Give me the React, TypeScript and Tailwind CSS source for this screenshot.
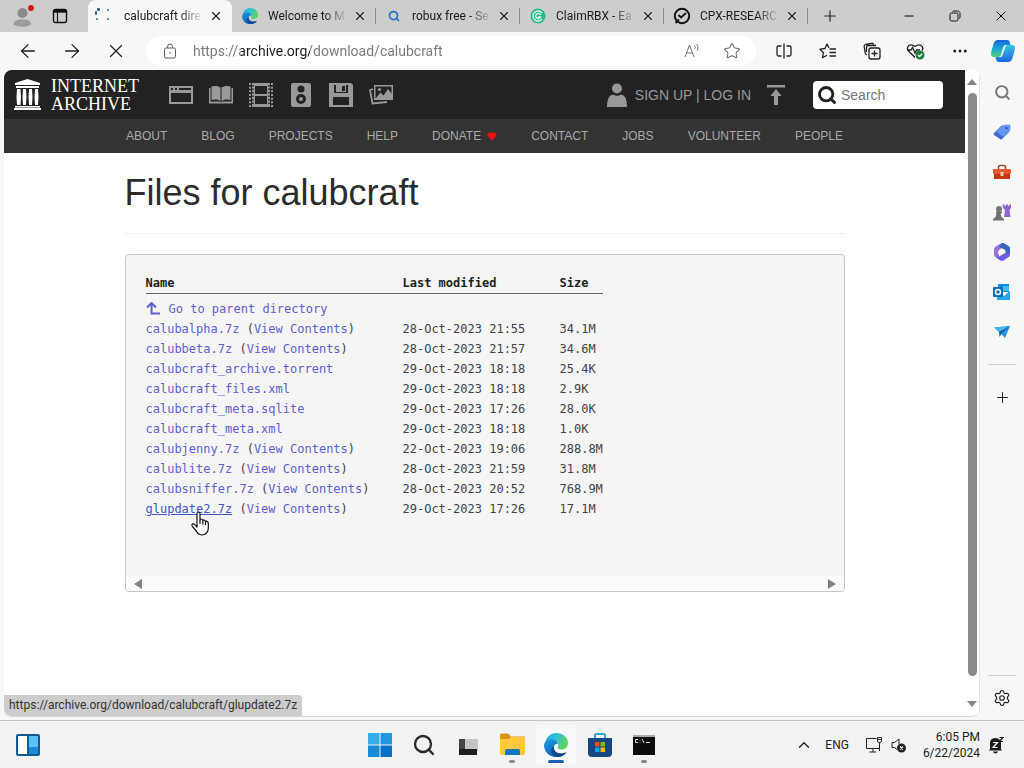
import React, { useState } from 'react';
import { ArrowLeft, ArrowRight, ChevronUp, Minus, MoreHorizontal, Plus, Search, Settings, Star, X } from 'lucide-react';

const tabs = [
  { title: 'calubcraft dire', icon: <LoadingIcon />, active: true },
  { title: 'Welcome to M', icon: <EdgeIcon className="h-4 w-4" /> },
  { title: 'robux free - Se', icon: <Search className="h-3 w-3 text-[#2f6fc4]" strokeWidth={3.5} /> },
  { title: 'ClaimRBX - Ea', icon: <ClaimIcon /> },
  { title: 'CPX-RESEARC', icon: <CpxIcon /> },
];

const navLinks = ['About', 'Blog', 'Projects', 'Help', 'Donate', 'Contact', 'Jobs', 'Volunteer', 'People'];

const files = [
  { name: 'calubalpha.7z', date: '28-Oct-2023 21:55', size: '34.1M', view: true },
  { name: 'calubbeta.7z', date: '28-Oct-2023 21:57', size: '34.6M', view: true },
  { name: 'calubcraft_archive.torrent', date: '29-Oct-2023 18:18', size: '25.4K' },
  { name: 'calubcraft_files.xml', date: '29-Oct-2023 18:18', size: '2.9K' },
  { name: 'calubcraft_meta.sqlite', date: '29-Oct-2023 17:26', size: '28.0K' },
  { name: 'calubcraft_meta.xml', date: '29-Oct-2023 18:18', size: '1.0K' },
  { name: 'calubjenny.7z', date: '22-Oct-2023 19:06', size: '288.8M', view: true },
  { name: 'calublite.7z', date: '28-Oct-2023 21:59', size: '31.8M', view: true },
  { name: 'calubsniffer.7z', date: '28-Oct-2023 20:52', size: '768.9M', view: true },
  { name: 'glupdate2.7z', date: '29-Oct-2023 17:26', size: '17.1M', view: true, hovered: true },
];

function LoadingIcon() {
  return (
    <svg viewBox="0 0 16 16" className="h-4 w-4">
      <g fill="#33648f">
        <rect x="3" y="0" width="3" height="3" rx="1" />
        <rect x="1" y="3" width="2" height="4" rx="1" />
        <rect x="2" y="10" width="2" height="2" rx="1" />
        <rect x="13" y="1" width="2" height="2" rx="1" />
        <rect x="13" y="10" width="2" height="2" rx="1" />
      </g>
    </svg>
  );
}

function EdgeIcon({ className }: { className: string }) {
  return (
    <svg viewBox="0 0 24 24" className={className}>
      <defs>
        <linearGradient id="edgeTop" x1="0" y1="0" x2="1" y2=".4">
          <stop offset="0" stopColor="#1b9fdc" />
          <stop offset=".5" stopColor="#2fc3d8" />
          <stop offset="1" stopColor="#5fd35b" />
        </linearGradient>
        <linearGradient id="edgeSide" x1="0" y1="0" x2=".6" y2="1">
          <stop offset="0" stopColor="#1b9de2" />
          <stop offset="1" stopColor="#0b5cb0" />
        </linearGradient>
      </defs>
      <path d="M1 10.5C2 4.500 6.500 0 12.300 0 19 0 24 4.500 24 10c0 4-3 6.500-6.500 6.500-3 0-4.400-1.300-3.700-2.300 1.600-2.200.3-5.700-3.800-6.500C6 6.900 2.500 8.500 1 10.500Z" fill="url(#edgeTop)" />
      <path d="M0 12.300C.3 8 5 5.500 9 6.400c3.500.8 5 3.200 4.800 5-2-1-4 .8-4 3.700 0 5 6.200 7 11.700 4.300C19 22.800 15.800 24 12 24 5.300 24 0 18.700 0 12.300Z" fill="url(#edgeSide)" />
      <path d="M9.800 13.500c-.7 5.500 5.700 8.700 11.500 6 .7-.3 1 .3.600.8C19.500 23.200 16 24.200 12.500 24 7 23 5 16 9.800 13.500Z" fill="#15478f" />
    </svg>
  );
}

function ClaimIcon() {
  return (
    <svg viewBox="0 0 16 16" className="h-4 w-4">
      <circle cx="8" cy="8" r="7.500" fill="#27b98e" />
      <path d="M12 5a5 5 0 1 0 0 6M10.500 7a2.500 2.500 0 1 0 0 2H8" fill="none" stroke="#d6f7ec" strokeWidth="1.500" />
    </svg>
  );
}

function CpxIcon() {
  return (
    <svg viewBox="0 0 18 18" className="h-[18px] w-[18px] shrink-0" fill="none" stroke="#111">
      <circle cx="9" cy="9" r="7.200" strokeWidth="2" />
      <path d="m5.500 8 2.500 2.500L13 6M2.500 16 6 12.500" strokeWidth="1.800" />
    </svg>
  );
}

function TabBar() {
  return (
    <div className="flex h-8 bg-[#cdcdcd]">
      <div className="flex w-[88px] shrink-0 items-center">
        <button aria-label="Profile" className="ml-3 mr-4 h-8 w-6">
          <svg viewBox="0 0 24 32" className="h-8 w-6">
            <circle cx="10.500" cy="13" r="5" fill="#8b8b8b" />
            <path d="M1.500 24.500c0-3.500 3-5 9-5s8.500 1.500 8.500 5c-4 3-13 3-17.500 0Z" fill="#9b9b9b" />
            <circle cx="19" cy="8" r="3" fill="#d41324" />
          </svg>
        </button>
        <button aria-label="Tab actions">
          <svg viewBox="0 0 16 16" className="h-4 w-4" fill="none" stroke="#111">
            <rect x="1.500" y="1.500" width="13" height="13" rx="2" strokeWidth="1.400" />
            <path d="M2 3.200h12" strokeWidth="3" />
            <path d="M5.500 4v10" strokeWidth="1.200" />
          </svg>
        </button>
      </div>
      {tabs.map((tab) => (
        <div
          key={tab.title}
          className={
            tab.active
              ? 'flex w-36 items-center rounded-t-lg bg-[#f7f7f7] pl-1.5'
              : 'flex w-36 items-center pl-2.5'
          }
        >
          <span className={tab.active ? 'flex w-[30px] shrink-0' : 'flex w-[26px] shrink-0'}>
            <span className="flex w-4 justify-center">{tab.icon}</span>
          </span>
          <span className="w-20 shrink-0 whitespace-nowrap text-xs text-[#1b1b1b] [mask-image:linear-gradient(to_right,black_70%,transparent)]">
            {tab.title}
          </span>
          <button aria-label="Close tab" className="mr-1 flex h-4 flex-1 items-center justify-center">
            <X className="h-3.5 w-3.5 shrink-0 text-[#222]" strokeWidth={2} />
          </button>
          <span className={tab.active ? 'h-4 w-px' : 'h-4 w-px bg-[#8a8a8a]'} />
        </div>
      ))}
      <button aria-label="New tab" className="flex w-11 items-center justify-center">
        <Plus className="h-[18px] w-[18px] text-[#222]" strokeWidth={1.5} />
      </button>
      <div className="ml-auto flex">
        <button aria-label="Minimize" className="flex w-[46px] items-center justify-center">
          <Minus className="h-3.5 w-3.5 text-black" strokeWidth={1.8} />
        </button>
        <button aria-label="Restore" className="flex w-[46px] items-center justify-center">
          <svg viewBox="0 0 12 12" className="h-3 w-3" fill="none" stroke="#111">
            <rect x="1" y="3" width="8" height="8" rx="1.500" />
            <path d="M3.500 1.500C4 1 4.500 1 5 1h3.500C10 1 11 2 11 3.500V7c0 .5 0 1-.5 1.500" />
          </svg>
        </button>
        <button aria-label="Close" className="flex w-[46px] items-center justify-center">
          <X className="h-4 w-4 text-black" strokeWidth={1.5} />
        </button>
      </div>
    </div>
  );
}

function Toolbar() {
  const [url, setUrl] = useState('https://archive.org/download/calubcraft');

  return (
    <div className="flex h-[38px] items-center bg-[#f7f7f7] pl-1.5 text-[#222]">
      <button aria-label="Back" className="flex w-11 justify-center">
        <ArrowLeft className="h-[22px] w-[22px]" strokeWidth={1.4} />
      </button>
      <button aria-label="Forward" className="flex w-11 justify-center">
        <ArrowRight className="h-[22px] w-[22px]" strokeWidth={1.4} />
      </button>
      <button aria-label="Stop loading" className="flex w-11 justify-center">
        <X className="h-[22px] w-[22px]" strokeWidth={1.4} />
      </button>
      <div className="ml-2 mr-1.5 flex h-[30px] flex-1 items-center rounded-full bg-white">
        <svg viewBox="0 0 16 16" className="ml-4 h-4 w-4" fill="none" stroke="#5c5c5c">
          <rect x="2.500" y="5" width="11" height="10" rx="1.500" />
          <path d="M5.500 5V3.500a2.500 2.500 0 0 1 5 0V5" />
          <circle cx="8" cy="10" r=".8" fill="#5c5c5c" stroke="none" />
        </svg>
        <input
          aria-label="Address"
          value={url}
          onChange={(e) => setUrl(e.target.value)}
          className="ml-[15px] min-w-0 flex-1 bg-[linear-gradient(to_right,#767676_48px,#1b1b1b_48px,#1b1b1b_117px,#767676_117px)] bg-clip-text text-sm text-transparent outline-none"
        />
        <button aria-label="Read aloud" className="flex w-10 justify-center">
          <svg viewBox="0 0 18 16" className="h-4 w-[18px]" fill="none" stroke="#707070">
            <path d="m2 14 4.500-12L11 14M3.500 10h6M11.500 2.500c1 1 1 2.500.2 3.700M13.500 1c2 2 1.800 4.500.5 6.500" />
          </svg>
        </button>
        <button aria-label="Favorite" className="mr-1 flex w-10 justify-center">
          <Star className="h-[18px] w-[18px] text-[#707070]" strokeWidth={1.4} />
        </button>
      </div>
      <button aria-label="Split screen" className="flex w-11 justify-center">
        <svg viewBox="0 0 18 18" className="h-[18px] w-[18px]" fill="none" stroke="#222" strokeWidth="1.300">
          <path d="M6.500 4H3.500Q2 4 2 5.500v7Q2 14 3.500 14h3M11.500 4h3Q16 4 16 5.500v7q0 1.500-1.500 1.500h-3M9 1.500v15" />
        </svg>
      </button>
      <button aria-label="Favorites" className="flex w-11 justify-center">
        <svg viewBox="0 0 18 18" className="h-[18px] w-[18px]" fill="none" stroke="#222" strokeWidth="1.300" strokeLinejoin="round">
          <path d="M10 6 8 2 6 6.500l-5 .7 3.500 3.500-1 5L8 13.300M10.500 7H17M10.500 10.500H17M10.500 14H17" />
        </svg>
      </button>
      <button aria-label="Collections" className="flex w-11 justify-center">
        <svg viewBox="0 0 18 18" className="h-[18px] w-[18px]" fill="none" stroke="#222" strokeWidth="1.300">
          <rect x="6" y="6" width="11" height="11" rx="2" />
          <path d="M11.500 8.500v6M8.500 11.500h6M4 12.500c-1 0-1.500-.5-1.800-1.300L1.200 4.500c-.2-1 .4-1.700 1.300-2l6-1.200c1-.2 1.800.3 2 1.200l.3 1M3.500 10V5.500Q3.500 3.500 5.500 3.500H13" />
        </svg>
      </button>
      <button aria-label="Browser essentials" className="flex w-11 justify-center">
        <svg viewBox="0 0 20 18" className="h-[18px] w-5" fill="none" stroke="#222" strokeWidth="1.300">
          <path d="M9 15.500 2.500 9C-.5 5 4 .5 9 4.500c5-4 9.500.5 7 4M1 8h4l1.500-2.500L9 11l1.700-3H14" />
          <circle cx="14" cy="13" r="4.500" fill="#168039" stroke="none" />
          <path d="m12 13 1.500 1.500 2.700-2.800" stroke="#fff" />
        </svg>
      </button>
      <button aria-label="Settings and more" className="flex w-11 justify-center">
        <MoreHorizontal className="h-[18px] w-[18px]" strokeWidth={2} />
      </button>
      <button aria-label="Copilot" className="flex w-[42px] justify-center">
        <svg viewBox="0 0 24 24" className="h-6 w-6">
          <defs>
            <linearGradient id="copA" x1="0" y1="0" x2="0" y2="1">
              <stop offset="0" stopColor="#1264d8" />
              <stop offset=".5" stopColor="#19a8cf" />
              <stop offset="1" stopColor="#55d27a" />
            </linearGradient>
            <linearGradient id="copB" x1="0" y1="0" x2="0" y2="1">
              <stop offset="0" stopColor="#3cc4e0" />
              <stop offset="1" stopColor="#1967df" />
            </linearGradient>
          </defs>
          <path d="M7 1h9q2.500 0 3 3l.5 2H15q-2 0-2.500 2l-2.500 8q-.7 2-2.500 2H3q-3 0-3-3 0-1 .5-3l2-7Q3.500 1 7 1Z" fill="url(#copA)" />
          <path d="M17 23H8q-2.500 0-3-3l-.5-2H9q2 0 2.500-2L14 8q.7-2 2.500-2H21q3 0 3 3 0 1-.5 3l-2 7q-1 4-4.500 4Z" fill="url(#copB)" />
          <path d="M12.500 8Q13 6 15 6h1.500Q14.700 6 14 8l-2.500 8Q11 18 9 18H7.500Q9.300 18 10 16Z" fill="#e9fbff" />
        </svg>
      </button>
    </div>
  );
}

function ArchiveHeader() {
  return (
    <header className="font-['Liberation_Sans',Arial,sans-serif]">
      <div className="flex h-[49px] items-center bg-[#222] pl-2.5 text-[#999]">
        <a href="#home" aria-label="Internet Archive" className="flex w-[147px] items-center gap-2.5 text-white">
          <svg viewBox="0 0 27 31" className="h-[31px] w-[27px] shrink-0" fill="currentColor">
            <path d="M13.500 0 26 4v2H1V4ZM2 7h23v2H2ZM1 27h25v1.500H1ZM0 29h27v2H0Z" />
            <path d="M3 10h3.500l.5 8-.5 8H3l-.5-8ZM9 10h3l.5 8-.5 8H9l-.5-8ZM15 10h3l.5 8-.5 8h-3l-.5-8ZM21 10h3l.5 8-.5 8h-3l-.5-8Z" />
          </svg>
          <span className="flex flex-col font-['Liberation_Serif',serif] text-lg leading-[18px]">
            <span>INTERNET</span>
            <span>ARCHIVE</span>
          </span>
        </a>
        <a href="#web" aria-label="Web" className="flex w-10 justify-center">
          <svg viewBox="0 0 24 24" className="h-6 w-6" fill="currentColor">
            <path d="M0 3h24v18H0ZM2 10v9h20v-9ZM2 5v2h2V5Zm4 0v2h2V5Zm4 0v2h12V5Z" fillRule="evenodd" />
          </svg>
        </a>
        <a href="#texts" aria-label="Texts" className="flex w-10 justify-center">
          <svg viewBox="0 0 24 24" className="h-6 w-6" fill="currentColor">
            <path d="M2.500 3.500c3-1 7-.5 9 1V18c-2-1.500-6-2-9-1ZM21.500 3.500c-3-1-7-.5-9 1V18c2-1.500 6-2 9-1Z" />
            <path d="M0 5h1.500v13.500H11l1 .8 1-.8h9.500V5H24v15.500H0Z" />
          </svg>
        </a>
        <a href="#video" aria-label="Video" className="flex w-10 justify-center">
          <svg viewBox="0 0 24 24" className="h-6 w-6" fill="currentColor">
            <path d="M3 0h18v24H3ZM6 3v8h12V3ZM6 13v8h12v-8Z" fillRule="evenodd" />
            <path d="M1 0v24M23 0v24" stroke="currentColor" strokeWidth="2" strokeDasharray="2 1.670" />
            <path d="M4 2v20M20 2v20" stroke="#222" strokeWidth="1.500" strokeDasharray="1.500 2" />
          </svg>
        </a>
        <a href="#audio" aria-label="Audio" className="flex w-10 justify-center">
          <svg viewBox="0 0 24 24" className="h-6 w-6" fill="currentColor">
            <path d="M4 0h16q2 0 2 2v20q0 2-2 2H4q-2 0-2-2V2q0-2 2-2Z" />
            <circle cx="12" cy="6" r="3.500" fill="#222" />
            <circle cx="12" cy="16" r="5" fill="#222" />
            <circle cx="12" cy="16" r="2" />
          </svg>
        </a>
        <a href="#software" aria-label="Software" className="flex w-10 justify-center">
          <svg viewBox="0 0 24 24" className="h-6 w-6" fill="currentColor">
            <path d="M0 0h22l2 2v22H0ZM5 2v8h14V2ZM4 14v8h16v-8Z" fillRule="evenodd" />
            <path d="M7 2h10v7H7Zm6 1v5h3V3Z" fillRule="evenodd" />
          </svg>
        </a>
        <a href="#images" aria-label="Images" className="flex w-10 justify-center">
          <svg viewBox="0 0 24 24" className="h-6 w-6" fill="currentColor">
            <path d="M5 2h19v15H5Zm1.500 1.500v12l5-6 3 3 4.500-6.500 3.500 4.500V3.500Z" fillRule="evenodd" />
            <circle cx="10.500" cy="6.500" r="1.500" />
            <path d="m4 6-3 1 2.500 13.500L18 19" fill="none" stroke="currentColor" strokeWidth="1.800" />
          </svg>
        </a>
        <div className="ml-auto flex items-center text-sm">
          <svg viewBox="0 0 20 26" className="mr-2 h-[26px] w-5" fill="currentColor">
            <circle cx="10" cy="6.500" r="5" />
            <path d="M0 25q0-12 6-12.500 4 2.500 8 0Q20 13 20 25Z" />
          </svg>
          <span>
            <a href="#signup">SIGN UP</a> | <a href="#login">LOG IN</a>
          </span>
          <button aria-label="Upload" className="ml-4 mr-7">
            <svg viewBox="0 0 18 20" className="h-5 w-[18px]" fill="currentColor">
              <path d="M0 0h18v2.500H0ZM9 4l5.500 7h-3.500v9H7v-9H3.500Z" />
            </svg>
          </button>
          <label className="mr-[22px] flex h-7 w-[130px] items-center rounded bg-white pl-1">
            <Search className="h-5 w-5 shrink-0 text-[#222]" strokeWidth={3.5} />
            <input aria-label="Search" placeholder="Search" className="ml-1 min-w-0 flex-1 text-sm outline-none placeholder:text-[#777]" />
          </label>
        </div>
      </div>
      <nav className="flex h-[34px] items-center justify-center gap-[34px] bg-[#333] pb-px text-xs uppercase text-[#aaa]">
        {navLinks.map((link) => (
          <a key={link} href={'#' + link.toLowerCase()} className="flex items-center">
            {link}
            {link === 'Donate' && (
              <svg viewBox="0 0 10 10" className="ml-1.5 h-2.5 w-2.5" fill="#ee1111">
                <path d="M5 9.500 1 5.500C-.5 3 2 .5 5 2c3-1.500 5.500 1 4 3.500Z" />
              </svg>
            )}
          </a>
        ))}
      </nav>
    </header>
  );
}

function HandCursor() {
  return (
    <svg viewBox="0 0 20 26" className="absolute left-11 top-3 h-[26px] w-5" fill="#fff" stroke="#111" strokeWidth="1.200" strokeLinejoin="round">
      <path d="M7 16V3q0-2 1.500-2T10 3v7q0-2 1.400-2t1.400 2q.2-1.200 1.400-1T15.500 11q.3-1 1.500-.7t1.300 2V17q0 6-6 7-4 0-6-4l-3.500-4q-1.800-2.500 0-3.300Q4 12.500 7 16Z" />
      <path d="M10 10v3M12.800 10v3.500M15.500 11v3" />
    </svg>
  );
}

function FileList() {
  return (
    <div className="overflow-hidden rounded border border-[#c6c6c6] bg-[#f5f5f5] font-['DejaVu_Sans_Mono',monospace] text-xs leading-5 text-[#444]">
      <div className="h-[321px] px-5 pt-[18px]">
        <table className="w-[457px] table-fixed">
          <thead>
            <tr className="border-b border-[#666] text-left text-[#222]">
              <th className="w-[257px]">Name</th>
              <th className="w-[157px]">Last modified</th>
              <th>Size</th>
            </tr>
          </thead>
          <tbody>
            <tr>
              <td colSpan={3} className="pt-[5px]">
                <a href="#parent" className="flex items-center gap-2 text-[#5f5fd0]">
                  <svg viewBox="0 0 15 15" className="h-[15px] w-[15px]" fill="none" stroke="currentColor" strokeWidth="2">
                    <path d="M1 5.500 5.500 1 10 5.500M5.500 1v10.500H14" />
                  </svg>
                  Go to parent directory
                </a>
              </td>
            </tr>
            {files.map((file) => (
              <tr key={file.name}>
                <td className="relative whitespace-nowrap">
                  <a href={'#' + file.name} className={file.hovered ? 'text-[#3f55c0] underline' : 'text-[#5f5fd0]'}>
                    {file.name}
                  </a>
                  {file.view && (
                    <>
                      {' '}
                      (<a href={'#view-' + file.name} className="text-[#5f5fd0]">View Contents</a>)
                    </>
                  )}
                  {file.hovered && <HandCursor />}
                </td>
                <td>{file.date}</td>
                <td>{file.size}</td>
              </tr>
            ))}
          </tbody>
        </table>
      </div>
      <div className="flex h-[15px] items-center justify-between bg-[#fcfcfc] px-2 text-[#808080]">
        <svg viewBox="0 0 8 10" className="h-2.5 w-2" fill="currentColor"><path d="M8 0v10L0 5Z" /></svg>
        <svg viewBox="0 0 8 10" className="h-2.5 w-2" fill="currentColor"><path d="M0 0v10l8-5Z" /></svg>
      </div>
    </div>
  );
}

function PageView() {
  return (
    <main className="relative mb-[3px] ml-1 flex flex-1 overflow-hidden rounded-lg border-b border-[#d5d5d5] bg-white">
      <div className="min-w-0 flex-1">
        <ArchiveHeader />
        <div className="mx-auto max-w-[720px]">
          <h1 className="border-b border-[#eee] pb-5 pt-5 font-['Liberation_Sans',Arial,sans-serif] text-4xl leading-10 text-[#2c2c2c]">
            Files for calubcraft
          </h1>
          <div className="pt-5">
            <FileList />
          </div>
        </div>
      </div>
      <div className="flex w-[15px] flex-col items-center border-r border-[#e2e2e2] py-2 text-[#868686]">
        <svg viewBox="0 0 10 8" className="h-2 w-2.5" fill="currentColor"><path d="M5 1l5 6H0Z" /></svg>
        <div className="mb-6 mt-[7px] w-[9px] flex-1 rounded-full bg-[#8b8b8b]" />
        <svg viewBox="0 0 10 8" className="h-2 w-2.5" fill="currentColor"><path d="M0 1h10L5 7Z" /></svg>
      </div>
      <div className="absolute bottom-0 left-0 rounded-tr bg-[#cdcdcd] px-[5px] text-xs leading-[21px] text-[#333]">
        https://archive.org/download/calubcraft/glupdate2.7z
      </div>
    </main>
  );
}

const sidebarApps = [
  {
    label: 'Search',
    icon: <Search className="h-[17px] w-[17px] text-[#777]" strokeWidth={2.8} />,
  },
  {
    label: 'Shopping',
    icon: (
      <svg viewBox="0 0 18 18" className="h-[18px] w-[18px]">
        <path d="m1 10 7-7 6-1q2 0 2 2v5l-7 7q-1 1-2 0l-6-4q-1-1 0-2Z" fill="#3d6dd3" />
        <path d="m3 8 7-6 6-.5q1.500 0 1.500 2L17 8l-7 6Z" fill="#6494ef" />
        <circle cx="13.500" cy="5" r="1.200" fill="#274d9f" />
      </svg>
    ),
  },
  {
    label: 'Tools',
    icon: (
      <svg viewBox="0 0 18 18" className="h-[18px] w-[18px]">
        <path d="M5.500 6V4q0-1.500 2-1.500h3q2 0 2 1.500v2" fill="none" stroke="#9b4a35" strokeWidth="1.500" />
        <rect x="0" y="6" width="18" height="5" rx="1" fill="#e85a2e" />
        <path d="M1 11h16v5H1Z" fill="#c5370f" />
        <rect x="7.500" y="9" width="3" height="4" fill="#f9c9a8" />
      </svg>
    ),
  },
  {
    label: 'Games',
    icon: (
      <svg viewBox="0 0 18 18" className="h-[18px] w-[18px]">
        <path d="M9.500 1.500h2v1.500h1.500V1.500h2V3h1.300V1.500H18V5l-1.500 2 1 7H11l1-7-2-2Z" fill="#8b67cb" />
        <circle cx="6" cy="6" r="3" fill="#777" />
        <path d="M3 8.500h6v2H7.500l1 3.500 2.500 2v1.500H0V16l2.500-2 1-3.500H3Z" fill="#717171" />
      </svg>
    ),
  },
  {
    label: 'Microsoft 365',
    icon: (
      <svg viewBox="0 0 18 18" className="h-[18px] w-[18px]">
        <path d="M9 0Q4 2 1.500 4.500 1 5 1 6v6q0 1 1 1.500l4 3V11.500Q5 11 5 9.500 5 7 9 5Z" fill="#9d72df" />
        <path d="M9 0q1-.3 2 .3l5 3q1 .7 1 1.700v6l-4.500-1V8q0-1-1-1.500L6 4Q7 1 9 0Z" fill="#3c63bb" />
        <path d="M17 10v2q0 1-1 1.700l-5 3.500q-2 1-4 0L2 13.700q3 .5 5-.7l5-3Z" fill="#6a5fe0" />
      </svg>
    ),
  },
  {
    label: 'Outlook',
    icon: (
      <svg viewBox="0 0 18 18" className="h-[18px] w-[18px]">
        <path d="M5 1h11v8H5Z" fill="#1286d9" />
        <path d="M10 3h6v5h-6Z" fill="#39c2f1" />
        <path d="M4 9l7 4 6-5v9H4Z" fill="#26a6e7" />
        <rect x="0" y="4" width="10" height="10" rx="1" fill="#096dbb" />
        <circle cx="5" cy="9" r="2.500" fill="none" stroke="#fff" strokeWidth="1.500" />
      </svg>
    ),
  },
  {
    label: 'Drop',
    icon: (
      <svg viewBox="0 0 18 18" className="h-[18px] w-[18px]">
        <path d="M1 4.500 17 3l-5 12-4-4.500Z" fill="#2492df" />
        <path d="M1 4.500 17 3 6 9Z" fill="#45b6ef" />
        <path d="M6 9 17 3 8.500 10.500 6.500 14Z" fill="#1260a6" />
      </svg>
    ),
  },
];

function Sidebar() {
  return (
    <aside className="flex w-11 flex-col items-center pt-0.5">
      {sidebarApps.map((app) => (
        <button key={app.label} aria-label={app.label} className="flex h-10 w-full items-center justify-center">
          {app.icon}
        </button>
      ))}
      <hr className="mt-3 w-7 border-[#cfcfcf]" />
      <button aria-label="Customize" className="mt-3 flex h-10 w-full items-center justify-center">
        <Plus className="h-[17px] w-[17px] text-[#222]" strokeWidth={1.4} />
      </button>
      <hr className="mt-auto w-7 border-[#cfcfcf]" />
      <button aria-label="Settings" className="flex h-11 w-full items-center justify-center">
        <Settings className="h-[18px] w-[18px] text-[#222]" strokeWidth={1.6} />
      </button>
    </aside>
  );
}

const taskbarApps = [
  {
    label: 'Start',
    icon: (
      <svg viewBox="0 0 24 24" className="h-6 w-6" fill="#168bd8">
        <path d="M0 0h11.500v11.500H0Z" fill="#34aee8" />
        <path d="M12.500 0H24v11.500H12.500Z" fill="#2096df" />
        <path d="M0 12.500h11.500V24H0Z" />
        <path d="M12.500 12.500H24V24H12.500Z" fill="#0872c9" />
      </svg>
    ),
  },
  { label: 'Search', icon: <Search className="h-6 w-6 text-[#292929]" strokeWidth={2.3} /> },
  {
    label: 'Task view',
    icon: (
      <svg viewBox="0 0 24 24" className="h-6 w-6">
        <path d="M8 6h14v12H8Z" fill="#c4c4c4" />
        <path d="M3 6h6v11H3Z" fill="#444" />
        <path d="M3 16h18v6H3Z" fill="#1d1d1d" />
      </svg>
    ),
  },
  {
    label: 'File Explorer',
    running: true,
    icon: (
      <svg viewBox="0 0 26 24" className="h-6 w-[26px]">
        <path d="M1 2q0-1.500 1.500-1.500H9l3 3h12.500Q26 3.500 26 5v6H1Z" fill="#d99418" />
        <path d="M1 6h9l2-2h12.500Q26 4 26 5.500V20q0 2-2 2H3q-2 0-2-2Z" fill="#ffc83d" />
        <path d="M6 22v-4q0-2 2-2h11q2 0 2 2v4Z" fill="#1677bd" />
      </svg>
    ),
  },
  { label: 'Microsoft Edge', running: true, active: true, icon: <EdgeIcon className="h-6 w-6" /> },
  {
    label: 'Microsoft Store',
    icon: (
      <svg viewBox="0 0 24 24" className="h-6 w-6">
        <path d="M7 6V2.500Q7 1 8.500 1h7Q17 1 17 2.500V6" fill="none" stroke="#36a8cf" strokeWidth="2" />
        <path d="M0 5h24v15q0 4-4 4H4q-4 0-4-4Z" fill="#17457f" />
        <path d="M7 9h4.500v4.500H7Z" fill="#f25022" />
        <path d="M12.500 9H17v4.500h-4.500Z" fill="#7fba00" />
        <path d="M7 14.500h4.500V19H7Z" fill="#00a4ef" />
        <path d="M12.500 14.500H17V19h-4.500Z" fill="#ffb900" />
      </svg>
    ),
  },
  {
    label: 'Command Prompt',
    running: true,
    icon: (
      <svg viewBox="0 0 24 24" className="h-6 w-6">
        <path d="M1 2h22v20H1Z" fill="#0c0c0c" />
        <path d="M1 2h22v2H1Z" fill="#a9a9a9" />
        <path d="M6 6.500H3.500v3H6M8 7v.5M8 9v.5M10 6l2 4M14 9.500h4" fill="none" stroke="#ddd" />
      </svg>
    ),
  },
];

function Taskbar() {
  return (
    <footer className="grid h-12 grid-cols-[1fr_auto_1fr] items-center border-t border-[#c4c4c4] bg-[#f2f2f2] text-[#222]">
      <button aria-label="Widgets" className="ml-4 w-6">
        <svg viewBox="0 0 24 22" className="h-[22px] w-6">
          <rect x="1" y="1" width="22" height="20" rx="1" fill="#fff" stroke="#105b91" strokeWidth="2" />
          <path d="M12 2h10v11H12Z" fill="#5ec1f5" />
          <path d="M12 13h10v7H12Z" fill="#1a87d7" />
          <path d="M12 1v20" stroke="#105b91" strokeWidth="2" />
        </svg>
      </button>
      <div className="flex">
        {taskbarApps.map((app) => (
          <button key={app.label} aria-label={app.label} className="relative flex h-10 w-11 items-center justify-center">
            {app.active && <span className="absolute inset-x-0.5 inset-y-0 rounded bg-[#f9f9f9]" />}
            <span className="relative">{app.icon}</span>
            {app.running && (
              <span
                className={
                  app.active
                    ? 'absolute bottom-0.5 h-[3px] w-4 rounded-full bg-[#1b62b5]'
                    : 'absolute bottom-0.5 h-[3px] w-1.5 rounded-full bg-[#888]'
                }
              />
            )}
          </button>
        ))}
      </div>
      <div className="flex items-center justify-end pr-5 text-xs">
        <button aria-label="Show hidden icons" className="mr-3">
          <ChevronUp className="h-[18px] w-[18px]" strokeWidth={1.8} />
        </button>
        <button className="mr-4">ENG</button>
        <button aria-label="Network and volume" className="mr-4 flex gap-2">
          <svg viewBox="0 0 18 18" className="h-[18px] w-[18px]" fill="none" stroke="#222">
            <path d="M11.500 2.500h-10v10h13V8M8 12.500V16M4.500 16H11" />
            <path d="M12.500 1.500h4V5q0 1.500-2 1.500t-2-1.500Zm0 2h4M14.500 6.500V15" />
          </svg>
          <svg viewBox="0 0 16 18" className="h-[18px] w-4" fill="none" stroke="#222">
            <path d="M6 13.500 3.500 11.500H1v-5h2.500L8 3v5" />
            <circle cx="10.500" cy="12" r="4.500" fill="#222" stroke="none" />
            <path d="m9 10.500 3 3m0-3-3 3" stroke="#fff" strokeWidth="1.200" />
          </svg>
        </button>
        <button className="text-right leading-4">
          6:05 PM
          <br />
          6/22/2024
        </button>
        <button aria-label="Notifications" className="ml-2">
          <svg viewBox="0 0 16 18" className="h-[18px] w-4">
            <path d="M2 13V7q0-4.500 5-5 6 .5 6 5v6l1 1.500H1ZM5 15.500h5q-.5 2-2.500 2t-2.500-2Z" fill="#1a1a1a" />
            <path d="M5 6.500h4.500L5 11.500h4.500" fill="none" stroke="#fff" strokeWidth="1.200" />
            <path d="M11.500 1.500H15l-3.500 4H15" fill="none" stroke="#1a1a1a" strokeWidth="1.200" />
          </svg>
        </button>
      </div>
    </footer>
  );
}

const App = () => {
  return (
    <div className="flex min-h-screen flex-col bg-[#f7f7f7] font-[Roboto,'Open_Sans',sans-serif]">
      <TabBar />
      <Toolbar />
      <div className="flex flex-1">
        <PageView />
        <Sidebar />
      </div>
      <Taskbar />
    </div>
  );
};

export default App;
